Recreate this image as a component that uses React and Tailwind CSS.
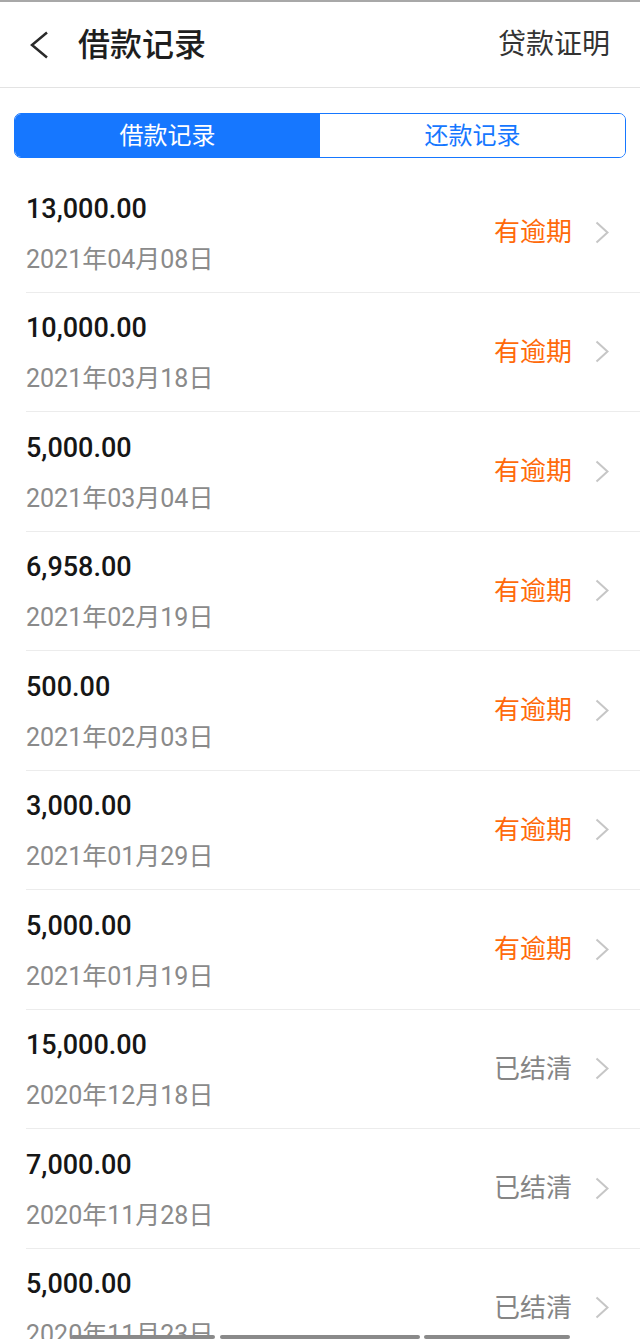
import React from "react";

const records = [
  { amount: "13,000.00", date: "2021年04月08日", overdue: true },
  { amount: "10,000.00", date: "2021年03月18日", overdue: true },
  { amount: "5,000.00", date: "2021年03月04日", overdue: true },
  { amount: "6,958.00", date: "2021年02月19日", overdue: true },
  { amount: "500.00", date: "2021年02月03日", overdue: true },
  { amount: "3,000.00", date: "2021年01月29日", overdue: true },
  { amount: "5,000.00", date: "2021年01月19日", overdue: true },
  { amount: "15,000.00", date: "2020年12月18日", overdue: false },
  { amount: "7,000.00", date: "2020年11月28日", overdue: false },
  { amount: "5,000.00", date: "2020年11月23日", overdue: false },
];

const font = { fontFamily: "Roboto, 'Noto Sans CJK SC', sans-serif" };

const RecordRow = ({ amount, date, overdue }) => (
  <div className="flex items-center h-[119.5px] pl-[26px]">
    <div className="flex items-center flex-1 h-full border-b border-[#ececec] pr-[31px]">
      <div className="flex-1 flex flex-col pt-[4px]">
        <div className="text-[27px] leading-[32px] font-medium text-[#161616]">{amount}</div>
        <div className="mt-[19px] text-[25px] leading-[32px] text-[#8a8a8a]">{date}</div>
      </div>
      <span className={`text-[26px] leading-[32px] ${overdue ? "text-[#ff6a0a]" : "text-[#858585]"}`}>
        {overdue ? "有逾期" : "已结清"}
      </span>
      <svg width="14" height="23" viewBox="0 0 14 23" className="ml-[23px]">
        <polyline points="1.5,1.5 12.5,11.5 1.5,21.5" fill="none" stroke="#c6c6c6" strokeWidth="2" />
      </svg>
    </div>
  </div>
);

export default function App() {
  return (
    <div className="relative h-[1339px] overflow-hidden bg-white" style={font}>
      {/* top edge */}
      <div className="h-[2px] bg-[#a8a8a8]" />

      {/* Header */}
      <div className="flex items-center h-[86px] border-b border-[#e3e3e3] pl-[30px] pr-[30px]">
        <svg width="18" height="28" viewBox="0 0 18 28">
          <polyline points="17,1.5 2,14 17,26.5" fill="none" stroke="#2a2a2a" strokeWidth="2.5" />
        </svg>
        <h1 className="ml-[30px] flex-1 text-[32px] font-medium text-[#1e1e1e]">借款记录</h1>
        <span className="text-[28px] text-[#333]">贷款证明</span>
      </div>

      {/* Tabs */}
      <div className="px-[14px] pt-[25px] pb-[15px]">
        <div className="flex h-[45px] rounded-[7px] border-[1.5px] border-[#1677ff] overflow-hidden">
          <div className="flex-1 flex items-center justify-center bg-[#1677ff] text-white text-[24px]">借款记录</div>
          <div className="flex-1 flex items-center justify-center bg-white text-[#1677ff] text-[24px]">还款记录</div>
        </div>
      </div>

      {/* Records */}
      <div>
        {records.map((r, i) => (
          <RecordRow key={i} {...r} />
        ))}
      </div>

      {/* bottom indicator bars */}
      <div className="absolute left-0 right-0 top-[1335px] flex">
        <div className="ml-[71px] w-[144px] h-[4px] rounded-full bg-[#8a8a8a]" />
        <div className="ml-[5px] w-[200px] h-[4px] rounded-full bg-[#8a8a8a]" />
        <div className="ml-[4px] w-[146px] h-[4px] rounded-full bg-[#8a8a8a]" />
      </div>
    </div>
  );
}
